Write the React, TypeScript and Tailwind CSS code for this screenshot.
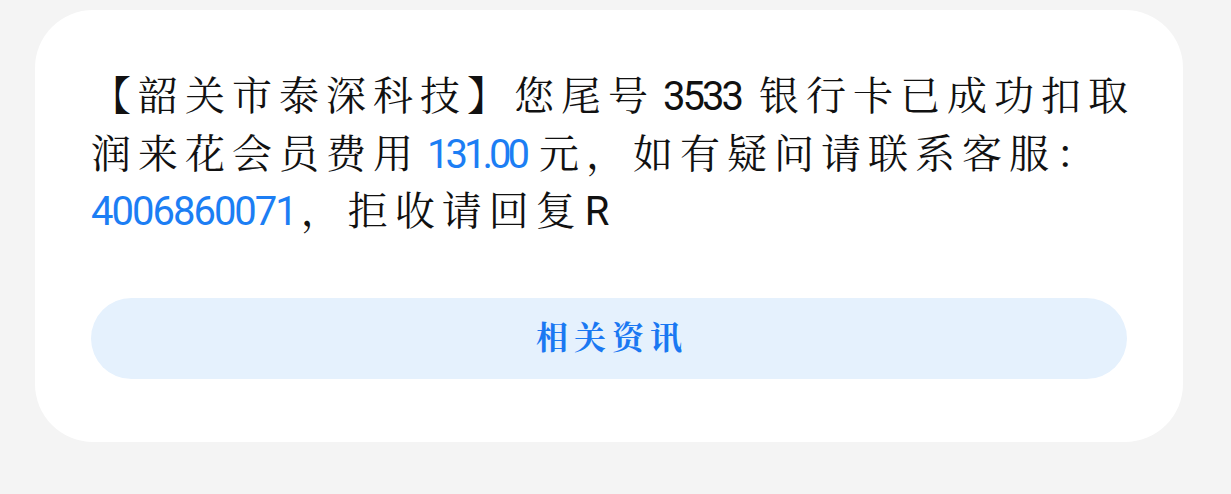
import React from "react";

const CJK =
  "font-['AR_PL_UKai_CN','KaiTi','STKaiti','Noto_Serif_CJK_SC','Noto_Sans_CJK_SC',sans-serif]";

function Num({
  children,
  blue,
  cls = "",
}: {
  children: React.ReactNode;
  blue?: boolean;
  cls?: string;
}) {
  return (
    <span
      className={
        "inline-block leading-none font-['Roboto','Noto_Sans',sans-serif] " +
        (blue ? "text-[#1c7ef4] " : "text-[#111] ") +
        cls
      }
    >
      {children}
    </span>
  );
}

export default function App() {
  return (
    <div className="min-h-[494px] w-full bg-[#f4f4f4] pt-[10px] pl-[35px]">
      <div className="w-[1148px] h-[432px] bg-white rounded-[58px] px-[56px] pt-[54px] flex flex-col">
        <div className={`${CJK} text-[40px] text-[#111] tracking-[7px] whitespace-nowrap`}>
          <div className="h-[57.5px] leading-[57.5px]">
            【韶关市泰深科技】您尾号<Num cls="tracking-[-3px] ml-[8px] mr-[18px]">3533</Num>银行卡已成功扣取
          </div>
          <div className="h-[57.5px] leading-[57.5px]">
            润来花会员费用<Num blue cls="tracking-[-4px] ml-[7px] mr-[13px]">131.00</Num>元，如有疑问请联系客服：
          </div>
          <div className="h-[57.5px] leading-[57.5px]">
            <Num blue cls="tracking-[-2px] mr-[5px]">4006860071</Num>，拒收请回复<Num cls="ml-[2px]">R</Num>
          </div>
        </div>
        <button className="mt-[61px] h-[81px] w-full shrink-0 rounded-full bg-[#e5f1fd] flex items-center justify-center">
          <span className={`${CJK} text-[32px] leading-none font-bold text-[#1a78f2] tracking-[6px] pl-[6px] -mt-[6px]`}>
            相关资讯
          </span>
        </button>
      </div>
    </div>
  );
}
